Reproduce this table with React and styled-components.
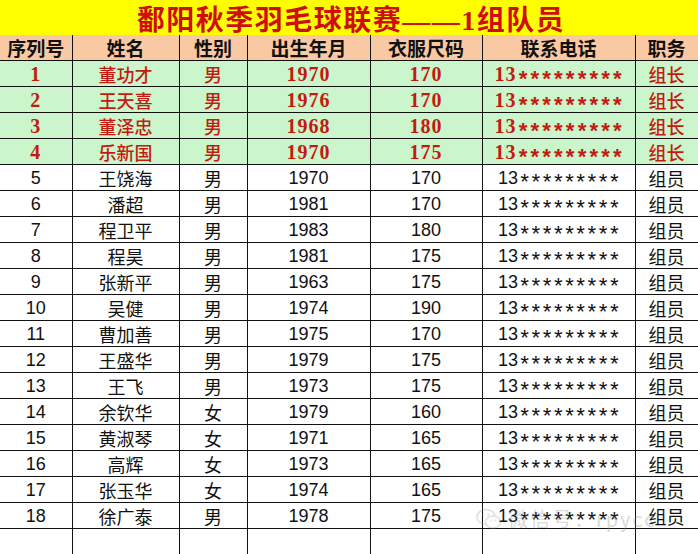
import styled, { createGlobalStyle } from "styled-components";

const columns = [
  { title: "序列号", width: 72 },
  { title: "姓名", width: 107 },
  { title: "性别", width: 68 },
  { title: "出生年月", width: 123 },
  { title: "衣服尺码", width: 112 },
  { title: "联系电话", width: 153 },
  { title: "职务", width: 63 },
];

const players = [
  ["董功才", "男", "1970", "170", "组长"],
  ["王天喜", "男", "1976", "170", "组长"],
  ["董泽忠", "男", "1968", "180", "组长"],
  ["乐新国", "男", "1970", "175", "组长"],
  ["王饶海", "男", "1970", "170", "组员"],
  ["潘超", "男", "1981", "170", "组员"],
  ["程卫平", "男", "1983", "180", "组员"],
  ["程昊", "男", "1981", "175", "组员"],
  ["张新平", "男", "1963", "175", "组员"],
  ["吴健", "男", "1974", "190", "组员"],
  ["曹加善", "男", "1975", "170", "组员"],
  ["王盛华", "男", "1979", "175", "组员"],
  ["王飞", "男", "1973", "175", "组员"],
  ["余钦华", "女", "1979", "160", "组员"],
  ["黄淑琴", "女", "1971", "165", "组员"],
  ["高辉", "女", "1973", "165", "组员"],
  ["张玉华", "女", "1974", "165", "组员"],
  ["徐广泰", "男", "1978", "175", "组员"],
];

const GlobalStyle = createGlobalStyle`
  html, body {
    margin: 0;
    padding: 0;
    background: #fff;
  }
`;

const Page = styled.div`
  position: relative;
  width: 698px;
  height: 554px;
  overflow: hidden;
  background: #fff;
`;

const Title = styled.div`
  height: 35px;
  background: #ffff00;
  display: flex;
  align-items: center;
  justify-content: center;
  padding-left: 4px;
  color: #cf0d0d;
  font-family: "Liberation Serif", "Noto Sans CJK SC", serif;
  font-size: 28px;
  font-weight: bold;
  letter-spacing: 1.5px;
`;

const Table = styled.table`
  width: 698px;
  border-collapse: collapse;
  table-layout: fixed;
`;

const HeadCell = styled.th`
  height: 25px;
  padding: 0;
  background: #f9c9a3;
  border: 1px solid #111;
  border-top: none;
  color: #111;
  font-family: "Noto Sans CJK SC", sans-serif;
  font-size: 19px;
  font-weight: bold;
  text-align: center;
  line-height: 1;
  &:first-child {
    border-left: none;
  }
`;

const Row = styled.tr`
  height: 26px;
  background: ${(p) => (p.$leader ? "#cbf5cb" : "#fff")};
`;

const Cell = styled.td`
  height: 25px;
  padding: 0;
  border: 1px solid #111;
  text-align: center;
  line-height: 1;
  white-space: nowrap;
  color: ${(p) => (p.$leader ? "#c21b12" : "#111")};
  font-family: ${(p) =>
    p.$num
      ? p.$leader
        ? '"Liberation Serif", serif'
        : '"Liberation Sans", sans-serif'
      : '"Noto Sans CJK SC", sans-serif'};
  font-size: ${(p) => (p.$num && p.$leader ? "20px" : "18px")};
  font-weight: ${(p) => (p.$leader ? (p.$num ? "bold" : 500) : "normal")};
  letter-spacing: ${(p) => (p.$num && p.$leader ? "1px" : "0")};
  &:first-child {
    border-left: none;
  }
`;

const Stars = styled.span`
  position: relative;
  top: 6px;
  font-family: "Liberation Mono", monospace;
  font-size: 22px;
  font-weight: ${(p) => (p.$leader ? "bold" : "normal")};
  letter-spacing: ${(p) => (p.$leader ? "-1.4px" : "-2px")};
  line-height: 0;
`;

const Watermark = styled.div`
  position: absolute;
  left: 476px;
  top: 504px;
  display: flex;
  align-items: center;
  gap: 6px;
  opacity: 0.3;
  color: #888;
  font-family: "Noto Sans CJK SC", sans-serif;
  font-size: 20px;
  letter-spacing: 2px;
  pointer-events: none;
`;

function Phone({ leader }) {
  return (
    <>
      13<Stars $leader={leader}>*********</Stars>
    </>
  );
}

export default function App() {
  return (
    <Page>
      <GlobalStyle />
      <Title>鄱阳秋季羽毛球联赛——1组队员</Title>
      <Table>
        <colgroup>
          {columns.map((c) => (
            <col key={c.title} style={{ width: c.width }} />
          ))}
        </colgroup>
        <thead>
          <tr>
            {columns.map((c) => (
              <HeadCell key={c.title}>{c.title}</HeadCell>
            ))}
          </tr>
        </thead>
        <tbody>
          {players.map((p, i) => {
            const leader = p[4] === "组长";
            return (
              <Row key={p[0]} $leader={leader}>
                <Cell $num $leader={leader}>{i + 1}</Cell>
                <Cell $leader={leader}>{p[0]}</Cell>
                <Cell $leader={leader}>{p[1]}</Cell>
                <Cell $num $leader={leader}>{p[2]}</Cell>
                <Cell $num $leader={leader}>{p[3]}</Cell>
                <Cell $num $leader={leader}>
                  <Phone leader={leader} />
                </Cell>
                <Cell $leader={leader}>{p[4]}</Cell>
              </Row>
            );
          })}
          <Row>
            {columns.map((c) => (
              <Cell key={c.title} />
            ))}
          </Row>
        </tbody>
      </Table>
      <Watermark>
        <svg width="26" height="22" viewBox="0 0 26 22">
          <ellipse cx="10" cy="9" rx="9" ry="7.5" fill="none" stroke="#999" strokeWidth="1.5" />
          <ellipse cx="17" cy="14" rx="7.5" ry="6" fill="#fff" stroke="#999" strokeWidth="1.5" />
          <circle cx="7" cy="6.5" r="1.1" fill="#999" />
          <circle cx="12.5" cy="6.5" r="1.1" fill="#999" />
          <circle cx="15" cy="12.5" r="0.9" fill="#999" />
          <circle cx="19.5" cy="12.5" r="0.9" fill="#999" />
        </svg>
        <span>微信号：rpycc</span>
      </Watermark>
    </Page>
  );
}
